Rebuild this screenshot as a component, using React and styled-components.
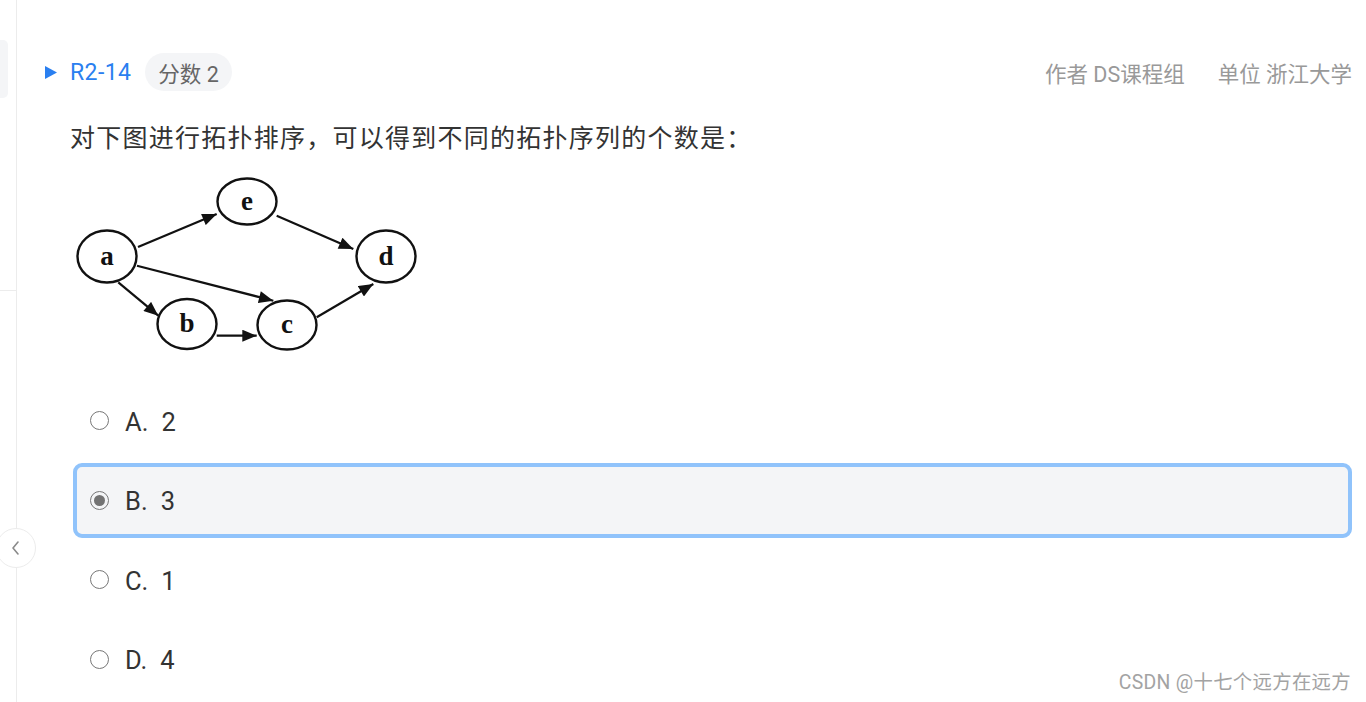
import React from "react";
import styled, { createGlobalStyle } from "styled-components";

const Global = createGlobalStyle`
  html, body { margin: 0; padding: 0; background: #fff; }
  body { font-family: Roboto, "Noto Sans CJK SC", sans-serif; color: #333; }
`;

const Page = styled.div`
  position: relative;
  display: flex;
  width: 1366px;
  height: 702px;
  overflow: hidden;
`;

const Rail = styled.aside`
  position: relative;
  width: 16px;
  flex: 0 0 16px;
  border-right: 1px solid #ececec;
  display: flex;
  flex-direction: column;
`;

const RailTab = styled.div`
  margin-top: 40px;
  width: 8px;
  height: 58px;
  background: #f4f5f7;
  border-radius: 0 5px 5px 0;
`;

const RailDivider = styled.div`
  margin-top: 192px;
  height: 1px;
  background: #ececec;
`;

const CollapseButton = styled.button`
  position: absolute;
  left: -4px;
  top: 528px;
  width: 40px;
  height: 40px;
  border-radius: 50%;
  border: 1px solid #ececec;
  background: #fff;
  padding: 0;
  display: flex;
  align-items: center;
  justify-content: center;
  color: #8a8a8a;
  z-index: 2;
`;

const Main = styled.main`
  flex: 1;
  padding: 53px 14px 0 28px;
  display: flex;
  flex-direction: column;
`;

const Header = styled.div`
  display: flex;
  align-items: center;
  height: 38px;
`;

const Caret = styled.svg`
  width: 12px;
  height: 13px;
  margin-right: 13px;
  fill: #2a7ff0;
`;

const ProblemId = styled.span`
  font-size: 23px;
  letter-spacing: 0.4px;
  color: #2a7ff0;
`;

const ScoreBadge = styled.span`
  margin-left: 14px;
  height: 38px;
  padding: 0 13px;
  border-radius: 19px;
  background: #f4f5f7;
  color: #666;
  font-size: 21.5px;
  display: inline-flex;
  align-items: center;
`;

const Meta = styled.div`
  margin-left: auto;
  display: flex;
  gap: 33px;
  color: #999;
  font-size: 21.5px;
`;

const Question = styled.p`
  margin: 30px 0 0 25px;
  font-size: 25px;
  line-height: 36px;
  letter-spacing: 1.25px;
  color: #333;
`;

const Graph = styled.svg`
  display: block;
  margin: 14px 0 0 25px;
  width: 360px;
  height: 186px;
`;

const Options = styled.div`
  margin: 26px 0 0 28px;
  display: flex;
  flex-direction: column;
  gap: 4.5px;
`;

const Option = styled.label`
  box-sizing: border-box;
  height: 75px;
  display: flex;
  align-items: center;
  padding: 0 13px;
  border: 4px solid ${(p) => (p.$selected ? "#90c3fb" : "transparent")};
  border-radius: 9px;
  background: ${(p) => (p.$selected ? "#f4f5f7" : "transparent")};
`;

const Radio = styled.span`
  box-sizing: border-box;
  width: 19px;
  height: 19px;
  border-radius: 50%;
  border: 1.6px solid #777;
  display: flex;
  align-items: center;
  justify-content: center;
  &::after {
    content: "";
    width: 11px;
    height: 11px;
    border-radius: 50%;
    background: ${(p) => (p.$checked ? "#737373" : "transparent")};
  }
`;

const OptionText = styled.span`
  margin-left: 16px;
  font-size: 25.5px;
  color: #333;
  padding-top: 2px;
`;

const OptionValue = styled.span`
  margin-left: 13px;
`;

const Watermark = styled.div`
  position: absolute;
  right: 15px;
  bottom: 7px;
  font-size: 19.4px;
  color: #a3a3a3;
  letter-spacing: 0.3px;
`;

const nodes = [
  { id: "a", x: 37, y: 85.5, ry: 26 },
  { id: "e", x: 177, y: 30.5, ry: 23 },
  { id: "d", x: 316, y: 85.5, ry: 26 },
  { id: "b", x: 117, y: 153, ry: 25 },
  { id: "c", x: 217, y: 154, ry: 24.5 },
];

const edges = [
  [68, 76, 146.7, 43],
  [67, 94.7, 203.3, 129.7],
  [48.3, 111.3, 88.3, 144.7],
  [146.7, 164.7, 186.7, 164.7],
  [246.7, 146.3, 303.3, 113],
  [206.7, 44.7, 283.3, 78],
];

function GraphPicture() {
  return (
    <Graph viewBox="0 0 360 186">
      <defs>
        <marker id="arrow" viewBox="0 0 12 10" refX="12" refY="5" markerWidth="15" markerHeight="12" orient="auto" markerUnits="userSpaceOnUse">
          <path d="M0 0 L12 5 L0 10 z" fill="#111" />
        </marker>
      </defs>
      {edges.map(([x1, y1, x2, y2], i) => (
        <line key={i} x1={x1} y1={y1} x2={x2} y2={y2} stroke="#111" strokeWidth="2.2" markerEnd="url(#arrow)" />
      ))}
      {nodes.map((n) => (
        <g key={n.id}>
          <ellipse cx={n.x} cy={n.y} rx="29.5" ry={n.ry} fill="#fff" stroke="#111" strokeWidth="2.4" />
          <text
            x={n.x}
            y={n.y + 8}
            textAnchor="middle"
            fontFamily='"Liberation Serif", serif'
            fontWeight="bold"
            fontSize="27"
            fill="#111"
          >
            {n.id}
          </text>
        </g>
      ))}
    </Graph>
  );
}

const options = [
  { key: "A", value: "2" },
  { key: "B", value: "3", selected: true },
  { key: "C", value: "1" },
  { key: "D", value: "4" },
];

export default function App() {
  return (
    <>
      <Global />
      <Page>
        <Rail>
          <RailTab />
          <RailDivider />
          <CollapseButton aria-label="collapse">
            <svg width="12" height="16" viewBox="0 0 12 16" fill="none" stroke="currentColor" strokeWidth="1.6" strokeLinecap="round" strokeLinejoin="round">
              <path d="M8 2 L3 8 L8 14" />
            </svg>
          </CollapseButton>
        </Rail>
        <Main>
          <Header>
            <Caret viewBox="0 0 12 13">
              <path d="M0 0 L12 6.5 L0 13 z" />
            </Caret>
            <ProblemId>R2-14</ProblemId>
            <ScoreBadge>分数 2</ScoreBadge>
            <Meta>
              <span>作者 DS课程组</span>
              <span>单位 浙江大学</span>
            </Meta>
          </Header>
          <Question>对下图进行拓扑排序，可以得到不同的拓扑序列的个数是：</Question>
          <GraphPicture />
          <Options>
            {options.map((o) => (
              <Option key={o.key} $selected={o.selected}>
                <Radio $checked={o.selected} />
                <OptionText>
                  {o.key}.<OptionValue>{o.value}</OptionValue>
                </OptionText>
              </Option>
            ))}
          </Options>
        </Main>
        <Watermark>CSDN @十七个远方在远方</Watermark>
      </Page>
    </>
  );
}
